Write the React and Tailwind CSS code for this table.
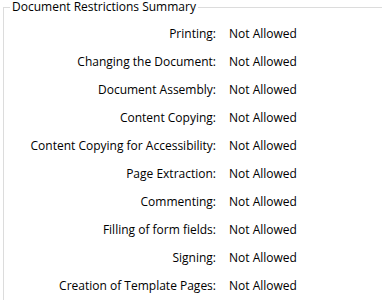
export default function App() {
  const rows = [
    "Printing",
    "Changing the Document",
    "Document Assembly",
    "Content Copying",
    "Content Copying for Accessibility",
    "Page Extraction",
    "Commenting",
    "Filling of form fields",
    "Signing",
    "Creation of Template Pages",
  ];
  return (
    <div
      className="w-[382px] h-[300px] overflow-hidden bg-white text-black text-[12px]"
      style={{ fontFamily: '"Open Sans", "Noto Sans", sans-serif' }}
    >
      <fieldset className="ml-[3px] mt-0 w-[420px] h-[320px] border-l border-t border-[#dcdcdc] m-0 p-0">
        <legend className="ml-[6px] px-[2px] leading-[14px]">Document Restrictions Summary</legend>
        <div className="grid grid-cols-[212px_1fr] gap-x-[13px] mt-[6px]">
          {rows.map((r) => (
            <div key={r} className="contents">
              <div className="h-[28px] flex items-center justify-end">{r}:</div>
              <div className="h-[28px] flex items-center">Not Allowed</div>
            </div>
          ))}
        </div>
      </fieldset>
    </div>
  );
}
